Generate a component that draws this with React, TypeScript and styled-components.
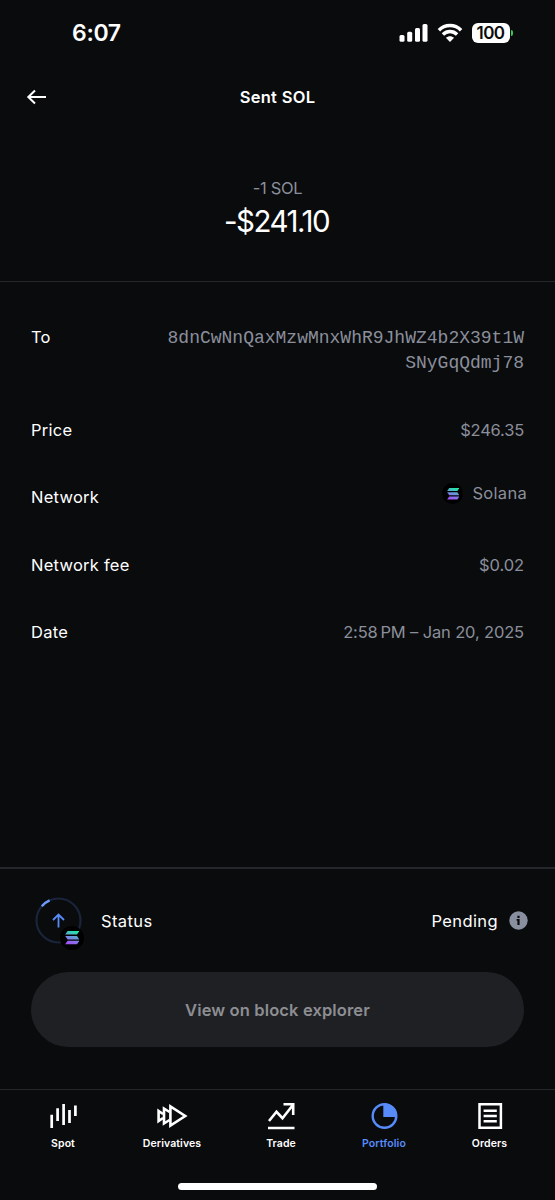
import React from "react";
import styled, { createGlobalStyle } from "styled-components";

const GlobalStyle = createGlobalStyle`
  * { box-sizing: border-box; }
  body { margin: 0; background: #0a0b0d; }
  svg { display: block; flex: none; }
`;

const Screen = styled.main`
  display: flex;
  flex-direction: column;
  width: 555px;
  height: 1200px;
  overflow: hidden;
  background: #0a0b0d;
  color: #fff;
  font-family: Inter, "Liberation Sans", sans-serif;
`;

const StatusBar = styled.div`
  display: flex;
  align-items: center;
  justify-content: space-between;
  height: 66px;
  padding: 0 42px 0 72px;
`;

const Clock = styled.span`
  font-size: 23px;
  font-weight: 600;
  line-height: 28px;
  letter-spacing: -0.3px;
`;

const StatusIcons = styled.div`
  display: flex;
  align-items: center;
`;

const WifiIcon = styled.svg`
  margin-left: 9px;
`;

const Battery = styled.div`
  display: flex;
  align-items: center;
  gap: 1px;
  margin-left: 9px;
`;

const BatteryBody = styled.span`
  display: flex;
  align-items: center;
  justify-content: center;
  width: 38px;
  height: 20px;
  padding-right: 1px;
  border-radius: 6px;
  background: #fff;
  color: #0a0b0d;
  font-size: 17px;
  font-weight: 600;
  letter-spacing: -0.6px;
`;

const BatteryCap = styled.span`
  width: 2px;
  height: 6px;
  border-radius: 0 2px 2px 0;
  background: #35c759;
`;

const Header = styled.header`
  display: grid;
  grid-template-columns: 60px 1fr 60px;
  align-items: center;
  height: 62px;
  padding: 0 26px;
`;

const Title = styled.h1`
  margin: 0;
  text-align: center;
  font-size: 16.5px;
  font-weight: 600;
  line-height: 24px;
  letter-spacing: 0.3px;
`;

const Hero = styled.section`
  display: flex;
  flex-direction: column;
  align-items: center;
  height: 154px;
  padding-top: 48px;
  border-bottom: 1px solid #25272b;
`;

const Amount = styled.span`
  font-size: 16.5px;
  line-height: 24px;
  letter-spacing: -0.3px;
  color: #8a8f9b;
`;

const Fiat = styled.span`
  margin-top: 1px;
  padding-right: 2px;
  font-size: 29.5px;
  line-height: 40px;
  letter-spacing: -1.5px;
`;

const Details = styled.dl`
  flex: 1;
  margin: 0;
  padding: 22px 31px 0;
`;

const Row = styled.div`
  display: flex;
  justify-content: space-between;
  padding: 21px 0;
  font-size: 16.5px;
  line-height: 25.4px;
`;

const Label = styled.dt`
  letter-spacing: 0.25px;
`;

const Value = styled.dd<{ $spacing?: number }>`
  margin: 0;
  color: #8a8f9b;
  text-align: right;
  letter-spacing: ${(p) => p.$spacing ?? -0.1}px;
`;

const Address = styled(Value)`
  width: 358px;
  margin: 1px 0 -1px;
  font-family: "Liberation Mono", monospace;
  font-size: 18px;
  letter-spacing: 0;
  overflow-wrap: anywhere;
`;

const NetworkValue = styled(Value)`
  display: flex;
  align-items: center;
  gap: 9px;
  margin: -8px -3px 0 0;
`;

const Coin = styled.span`
  display: flex;
  align-items: center;
  justify-content: center;
  width: 21px;
  height: 21px;
  border-radius: 50%;
  background: #000;
`;

const Footer = styled.section`
  height: 222px;
  padding: 27px 31px 0;
  border-top: 2px solid #25272b;
`;

const StatusRow = styled.div`
  display: flex;
  align-items: center;
  height: 49px;
  padding-left: 4px;
  font-size: 16.5px;
  line-height: 24px;
  letter-spacing: 0.4px;
`;

const Progress = styled.div`
  position: relative;
  width: 47px;
  height: 47px;
`;

const ProgressCoin = styled(Coin)`
  position: absolute;
  right: -2px;
  bottom: -6px;
  width: 24px;
  height: 24px;
`;

const StatusLabel = styled.span`
  flex: 1;
  margin-left: 19px;
`;

const StatusValue = styled.span`
  margin-right: 11px;
`;

const InfoIcon = styled.svg`
  margin-right: -4px;
`;

const ExplorerButton = styled.button`
  display: block;
  width: 493px;
  height: 75px;
  margin-top: 27px;
  padding: 0;
  border: 0;
  border-radius: 38px;
  background: #1f2024;
  color: #8d8e92;
  font: 600 16.5px/24px Inter, "Liberation Sans", sans-serif;
  letter-spacing: 0.13px;
`;

const TabBar = styled.nav`
  display: grid;
  grid-template-columns: 126px 92px 126px 80px 131px;
  height: 94px;
  padding-top: 12px;
  border-top: 1px solid #25272b;
`;

const Tab = styled.a<{ $active?: boolean }>`
  display: flex;
  flex-direction: column;
  align-items: center;
  gap: 5px;
  color: ${(p) => (p.$active ? "#578bfa" : "#fff")};
  font-size: 10.5px;
  font-weight: 600;
  line-height: 17px;
  letter-spacing: 0.1px;
`;

const HomeIndicator = styled.div`
  align-self: center;
  width: 199px;
  height: 7px;
  margin-bottom: 10px;
  border-radius: 4px;
  background: #fff;
`;

const SolanaMark = ({ width, id }: { width: number; id: string }) => (
  <svg width={width} height={width * 0.92} viewBox="0 0 100 92">
    <defs>
      <linearGradient id={id} gradientUnits="userSpaceOnUse" x1="65" y1="0" x2="35" y2="92">
        <stop offset="0" stopColor="#1eeaa6" />
        <stop offset="0.5" stopColor="#6f8fe0" />
        <stop offset="1" stopColor="#a350f5" />
      </linearGradient>
    </defs>
    <g fill={`url(#${id})`}>
      <path d="M18 0H99L83 24H1Z" />
      <path d="M1 34H83L99 58H18Z" />
      <path d="M18 68H99L83 92H1Z" />
    </g>
  </svg>
);

const icons = {
  Spot: (
    <svg width="28" height="28" viewBox="0 0 28 28" stroke="currentColor" strokeWidth="2.7">
      <path d="M2.7 12.7V26M8.6 6.3V19M14.6 2V23M20.5 8V21M26.4 3.5V14" />
    </svg>
  ),
  Derivatives: (
    <svg width="32" height="28" viewBox="0 0 32 28" fill="none" stroke="currentColor" strokeWidth="2.6">
      <path d="M14.4 4.5V23.5L29.2 14Z" />
      <path d="M13.5 10L8 6.5V21.5L13.5 18" />
      <path d="M7 12L2.6 9V19L7 16" />
    </svg>
  ),
  Trade: (
    <svg width="28" height="28" viewBox="0 0 28 28" fill="none" stroke="currentColor" strokeWidth="2.6">
      <path d="M2 19L9.5 9.8L15.5 16.2L25.5 3.5M16.5 2.3H26.2V13M1 26H27.5" />
    </svg>
  ),
  Portfolio: (
    <svg width="28" height="28" viewBox="0 0 28 28" fill="none" stroke="currentColor" strokeWidth="2.4">
      <circle cx="14.5" cy="14" r="11.8" />
      <path d="M13.3 1.5A13 13 0 0 1 27 15H13.3Z" fill="currentColor" stroke="none" />
    </svg>
  ),
  Orders: (
    <svg width="28" height="28" viewBox="0 0 28 28" fill="none" stroke="currentColor" strokeWidth="2.5">
      <path d="M3.5 2.3H24.9V25.8H3.5ZM7.6 8.8H20.8M7.6 14H20.8M7.6 19.3H20.8" />
    </svg>
  ),
};

export default function App() {
  return (
    <Screen>
      <GlobalStyle />
      <StatusBar>
        <Clock>6:07</Clock>
        <StatusIcons>
          <svg width="29" height="20" viewBox="0 0 29 20" fill="#fff">
            <rect x="0.5" y="12" width="5" height="6.8" rx="1.5" />
            <rect x="8.2" y="8.8" width="5" height="10" rx="1.5" />
            <rect x="16" y="5" width="5" height="13.8" rx="1.5" />
            <rect x="23.5" y="1" width="5" height="17.8" rx="1.5" />
          </svg>
          <WifiIcon width="26" height="20" viewBox="0 0 26 20" fill="none" stroke="#fff" strokeWidth="3.4">
            <path d="M1.9 7.2C8 .9 18 .9 24.1 7.2M5.9 11.5C10 7.5 16 7.5 20.1 11.5" />
            <path d="M8.9 14.8C11.3 12.6 14.7 12.6 17.1 14.8L13 19Z" fill="#fff" stroke="none" />
          </WifiIcon>
          <Battery>
            <BatteryBody>100</BatteryBody>
            <BatteryCap />
          </Battery>
        </StatusIcons>
      </StatusBar>

      <Header>
        <svg width="21" height="16" viewBox="0 0 21 16" fill="none" stroke="#fff" strokeWidth="2">
          <path d="M2 8H20M9 1.5L2.3 8L9 14.5" />
        </svg>
        <Title>Sent SOL</Title>
      </Header>

      <Hero>
        <Amount>-1 SOL</Amount>
        <Fiat>-$241.10</Fiat>
      </Hero>

      <Details>
        <Row>
          <Label>To</Label>
          <Address>8dnCwNnQaxMzwMnxWhR9JhWZ4b2X39t1WSNyGqQdmj78</Address>
        </Row>
        <Row>
          <Label>Price</Label>
          <Value $spacing={-0.2}>$246.35</Value>
        </Row>
        <Row>
          <Label>Network</Label>
          <NetworkValue $spacing={0.3}>
            <Coin>
              <SolanaMark width={12.5} id="network-mark" />
            </Coin>
            Solana
          </NetworkValue>
        </Row>
        <Row>
          <Label>Network fee</Label>
          <Value>$0.02</Value>
        </Row>
        <Row>
          <Label>Date</Label>
          <Value $spacing={-0.15}>2:58{"\u2009"}PM – Jan 20, 2025</Value>
        </Row>
      </Details>

      <Footer>
        <StatusRow>
          <Progress>
            <svg width="47" height="47" viewBox="0 0 47 47" fill="none">
              <circle cx="23.5" cy="23.5" r="22" stroke="#1a243b" strokeWidth="2.2" />
              <path d="M6.8 9.2A22 22 0 0 1 14.6 3.4" stroke="#6d9bfb" strokeWidth="2.4" />
              <path d="M23.5 30.5V18M18 23L23.5 17.5L29 23" stroke="#578bfa" strokeWidth="1.8" />
            </svg>
            <ProgressCoin>
              <SolanaMark width={14.5} id="status-mark" />
            </ProgressCoin>
          </Progress>
          <StatusLabel>Status</StatusLabel>
          <StatusValue>Pending</StatusValue>
          <InfoIcon width="19" height="19" viewBox="0 0 19 19">
            <circle cx="9.5" cy="9.5" r="9.2" fill="#8a8f9f" />
            <path d="M8.4 4.8H10.6V7H8.4ZM7.6 8.1H10.6V14H8.4V9.8H7.6Z" fill="#0a0b0d" />
          </InfoIcon>
        </StatusRow>
        <ExplorerButton>View on block explorer</ExplorerButton>
      </Footer>

      <TabBar>
        {Object.entries(icons).map(([name, icon]) => (
          <Tab key={name} $active={name === "Portfolio"}>
            {icon}
            {name}
          </Tab>
        ))}
      </TabBar>
      <HomeIndicator />
    </Screen>
  );
}
